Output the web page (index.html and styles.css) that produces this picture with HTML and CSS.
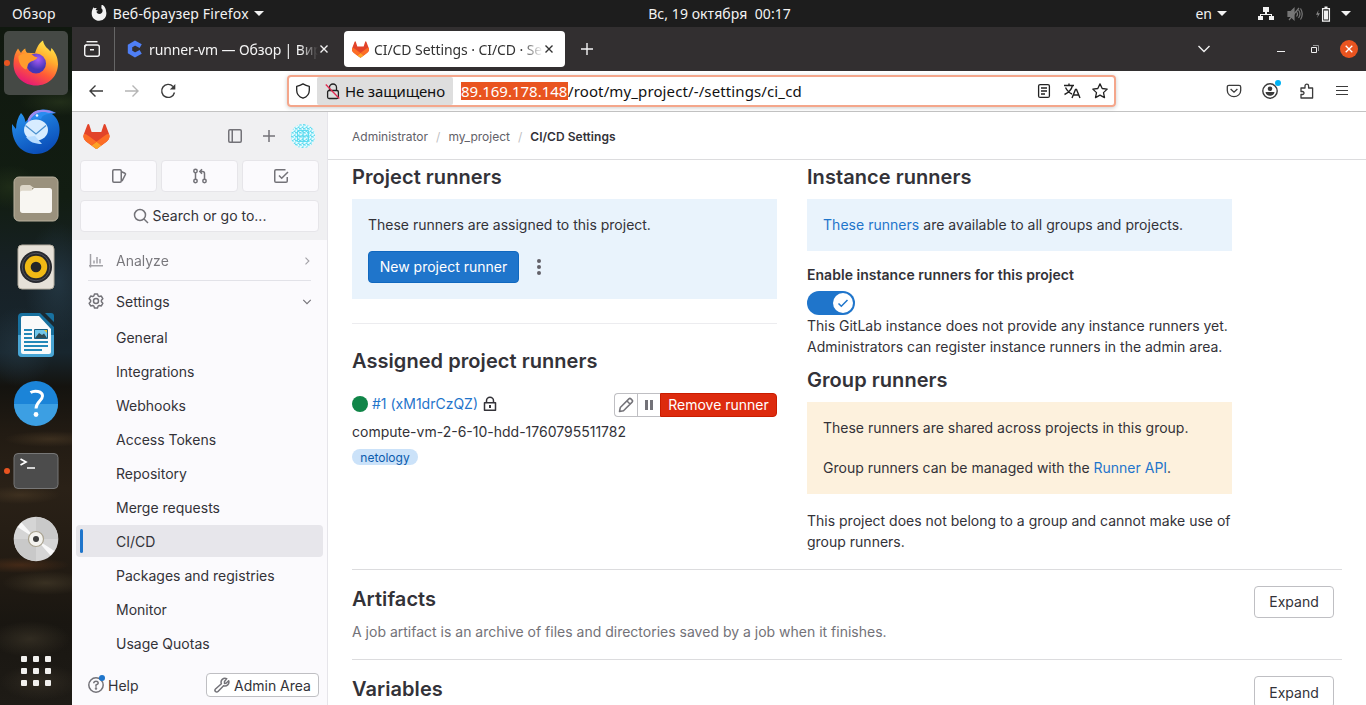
FILE: index.html
```html
<!DOCTYPE html>
<html lang="ru">
<head>
<meta charset="utf-8">
<title>CI/CD Settings · CI/CD · Settings</title>
<link rel="stylesheet" href="styles.css">
</head>
<body>
<div class="desktop">
  <header class="panel">
    <div class="panel-left">
      <span class="t-overview">Обзор</span>
      <span class="app-menu">
        <svg width="16" height="16" viewBox="0 0 16 16"><path fill="#f2f2f2" d="M2.600 2.200c.3.500.7.900 1.200 1.100.7-.3 1.400-.4 2.200-.3-.7.4-1.200 1-1.300 1.700.4.600 1.200.7 2.200.7-.2.7-.8 1-1.500 1.200.3 1.600 1.400 2.500 2.900 2.500 1.900 0 3.300-1.500 3.300-3.300 0-1.100-.5-1.900-1.300-2.500.1-1.200.3-2.300.2-4 3 1.400 4.600 4.500 4.600 7.300A7.300 7.300 0 0 1 8.200 15.800C4 15.800.7 12.700.7 8.500c0-2.400.6-4.500 1.900-6.300z"/></svg>
        <span class="t-app">Веб-браузер Firefox</span><i class="caret"></i>
      </span>
    </div>
    <div class="panel-clock">Вс, 19 октября &nbsp;00:17</div>
    <div class="panel-right">
      <span class="t-lang">en</span><i class="caret"></i>
      <svg class="net" width="16" height="14" viewBox="0 0 16 14"><path fill="#f2f2f2" d="M5 0h6v5H9v2h5v2h2v4h-5V9h2V8H3v1h2v4H0V9h2V7h5V5H5z"/></svg>
      <svg class="vol" width="16" height="16" viewBox="0 0 16 16" fill="none" stroke="#777" stroke-width="1.200"><path fill="#777" d="M1 5.500h3L7 2.500v11L4 10.500H1z"/><path d="M9.500 5.500q2 2.500 0 5M11.500 4q3 4 0 8M13.500 2.500q3.500 5.500 0 11M2 14 12 2"/></svg>
      <svg class="bat" width="17" height="16" viewBox="0 0 17 16"><path fill="#888" d="M3.500 4 1 8.700h2L2 12l3-4.700H3z"/><path fill="none" stroke="#f2f2f2" stroke-width="1.300" d="M7.600 2.600h6.800v12.600H7.600z"/><path fill="#f2f2f2" d="M9 4.500h4v9H9zM9.500.5h3v2h-3z"/></svg>
      <i class="caret"></i>
    </div>
  </header>

  <div class="workspace">
    <nav class="dock">
      <div class="dock-slot slot-active"><i class="running"></i>
        <svg width="48" height="48" viewBox="0 0 48 48">
          <defs>
            <linearGradient id="fx" x1=".8" y1="0" x2=".3" y2="1"><stop offset="0" stop-color="#fff04f"/><stop offset=".35" stop-color="#ffae2e"/><stop offset=".65" stop-color="#ff5a36"/><stop offset="1" stop-color="#e5147b"/></linearGradient>
            <radialGradient id="fxg" cx=".6" cy=".3"><stop offset="0" stop-color="#a95bf5"/><stop offset="1" stop-color="#4636b5"/></radialGradient>
          </defs>
          <path fill="url(#fx)" d="M6 9.500 9 14c1-2 2.500-3.500 4.300-4.500 0 1.500.5 3 1.700 4.300l8 .5C25 8 27 4 31 1.500c1 6 5 8 7.500 11l1-3.500c5 5.500 6.500 11 6.500 16.500C45.500 38 36 46.500 24 46.500S1.500 37.500 1.500 25C1.500 18.500 3 13.500 6 9.500z"/>
          <circle cx="24" cy="24.500" r="10" fill="url(#fxg)"/>
          <path fill="#ff9b2d" d="M6.500 17c5-3.500 11-4 16 .5l3 1c-2 3.500-6 3-8.500 5.500-2 2-1 5-3 6.500C9.500 29 6 23 6.500 17z"/>
        </svg>
      </div>
      <div class="dock-slot">
        <svg width="48" height="48" viewBox="0 0 48 48">
          <defs><linearGradient id="tb" x1="0" y1="0" x2=".5" y2="1"><stop offset="0" stop-color="#2a9af5"/><stop offset="1" stop-color="#0b4fb9"/></linearGradient></defs>
          <path fill="url(#tb)" d="M9 6c3 3 4 6 4.500 9L17 11c4-9 17-11 27-5l-4 1c9 6 9 19 5 27C40 43 32 47 24 47 10 47 1 37 0 22V17l4 5C4 16 6 10 9 6z"/>
          <path fill="#9a8af0" d="M16 12c4-10 15-12 28-6-8-1-12 0-15 4-5-1-9 1-13 6z"/>
          <path fill="#2a8cf0" d="M18 13c5-8 13-10 21-6-7 0-9 2-10 5-4-1-8 0-11 1z"/>
          <ellipse cx="24" cy="23" rx="12" ry="10.500" fill="#d7ecff"/><path fill="#b7dcff" d="M14 30c4 5 8 7 16 7l-7-8z"/>
          <path d="m13.500 18.500 10.500 8.500 10-8.500" fill="none" stroke="#4b91cf" stroke-width="1.200"/><circle cx="25" cy="8.500" r="1.300" fill="#e8f6ff"/>
        </svg>
      </div>
      <div class="dock-slot">
        <svg width="48" height="48" viewBox="0 0 48 48"><rect x="2" y="2" width="44" height="44" rx="5" fill="#9a917d" stroke="#b9b19e"/><path fill="#ddd6c8" d="M8 13c0-2 1-3 3-3h7l4 3h-2v7H8z"/><path fill="#f8f6f2" d="M8 18c0-1.500.8-2.200 2.200-2.200h9L22 13h15.500c1.500 0 2.500 1 2.500 2.500v20c0 1.500-1 2.500-2.500 2.500h-27C9 38 8 37 8 35.500z"/></svg>
      </div>
      <div class="dock-slot">
        <svg width="48" height="48" viewBox="0 0 48 48"><rect x="6" y="2" width="36" height="44" rx="4" fill="#e6e1d8" stroke="#b4ada0"/><circle cx="24" cy="24" r="16" fill="#27282d"/><circle cx="24" cy="24" r="13.800" fill="none" stroke="#50525b"/><circle cx="24" cy="24" r="11.200" fill="#f0b915"/><circle cx="24" cy="24" r="5.300" fill="#252628"/></svg>
      </div>
      <div class="dock-slot">
        <svg width="48" height="48" viewBox="0 0 48 48"><path fill="#18719f" d="M10 2h18l14 14v26a4 4 0 0 1-4 4H10a4 4 0 0 1-4-4V6a4 4 0 0 1 4-4zM33 2h6q3 0 3 3v6z"/><path fill="#49a5d4" d="M6 24h36v18a4 4 0 0 1-4 4H10a4 4 0 0 1-4-4z"/><path fill="#fafafa" d="M11 5h16l12 13v23q0 2-2 2H11q-2 0-2-2V7q0-2 2-2z"/><path d="M12 19h8M12 23h8M12 27h8M12 31h24M12 35h24M12 39h18" stroke="#2488b8" stroke-width="2"/><path fill="#70c6ea" stroke="#155e83" d="M22.500 18.500h13v9h-13z"/><path fill="#304c54" d="m23 27 4-5 3 2 2-1.500 3 4.500z"/><path fill="#eac22d" d="M32 19h3v3z"/></svg>
      </div>
      <div class="dock-slot">
        <svg width="48" height="48" viewBox="0 0 48 48"><circle cx="24" cy="24" r="22" fill="#1b84d8"/><path fill="#3c9fe3" d="M2 25h44a22 22 0 0 1-44 0z"/><path d="M18.500 13.500c4-2.500 12-1.500 12 3.500 0 4.500-6.500 6-6.500 12.500" fill="none" stroke="#fff" stroke-width="3"/><circle cx="24" cy="35.500" r="2.400" fill="#fff"/></svg>
      </div>
      <div class="dock-slot"><i class="running"></i>
        <svg width="48" height="48" viewBox="0 0 48 48"><rect x="2" y="6.500" width="44" height="35" rx="4" fill="#4c4c4c" stroke="#777"/><path d="m8.500 12 5.500 3-5.500 3M15 21h8" fill="none" stroke="#fff" stroke-width="1.700"/></svg>
      </div>
      <div class="dock-slot">
        <svg width="48" height="48" viewBox="0 0 48 48"><circle cx="24" cy="24" r="22.300" fill="#d5d5d5"/><path fill="#c9c9c9" d="M24 24V46A22 22 0 0 1 2 24zM24 24V2a22 22 0 0 1 22 22z"/><path fill="#f8f8f8" d="M24 24 5.500 12 9.500 7.500zM24 24l18.500 12-4 4.500z"/><circle cx="24" cy="24" r="7.500" fill="#f4f3ef" stroke="#a9a28f" stroke-width="1.200"/><circle cx="24" cy="24" r="3" fill="#3e3e3e"/></svg>
      </div>
      <div class="apps-grid"><i></i><i></i><i></i><i></i><i></i><i></i><i></i><i></i><i></i></div>
    </nav>

    <div class="browser">
      <div class="tabbar">
        <div class="recent"><svg width="18" height="18" viewBox="0 0 18 18" fill="none" stroke="#f4f4f4" stroke-width="1.400"><path d="M3.500 1.700h11"/><rect x="1.700" y="5" width="14.600" height="11.200" rx="2"/><path d="M1.700 7.500q0-2.500 2-2.500M7 9.700h4"/></svg></div>
        <div class="tab">
          <svg width="16" height="18" viewBox="0 0 16 18"><path fill="none" stroke="#4f7ff5" stroke-width="4.400" d="M13.700 6.200 8 3 3 6v6l5 3 5.700-3.200"/></svg>
          <span class="tab-title t-tab1">runner-vm — Обзор | Вир</span>
          <svg class="x" width="10" height="10" viewBox="0 0 10 10"><path d="m1.500 1.500 7 7m0-7-7 7" stroke="#f2f2f2" stroke-width="1.400"/></svg>
        </div>
        <div class="tab tab-on">
          <svg width="17" height="17" viewBox="0 0 25 24"><use href="#tanuki"/></svg>
          <span class="tab-title t-tab2">CI/CD Settings · CI/CD · Se</span>
          <svg class="x" width="10" height="10" viewBox="0 0 10 10"><path d="m1.500 1.500 7 7m0-7-7 7" stroke="#333" stroke-width="1.400"/></svg>
        </div>
        <svg class="newtab" width="14" height="14" viewBox="0 0 14 14"><path d="M7 1v12M1 7h12" stroke="#f4f4f4" stroke-width="1.400"/></svg>
        <div class="winctl">
          <svg width="14" height="14" viewBox="0 0 14 14" fill="none"><path d="m1.500 4 5.500 5.500L12.500 4" stroke="#f0f0f0" stroke-width="1.400"/></svg>
          <svg class="min" width="8" height="8" viewBox="0 0 8 8"><path d="M0 6.500h8" stroke="#f0f0f0"/></svg>
          <svg class="max" width="8" height="8" viewBox="0 0 8 8" fill="none"><path d="M.5 2.500h5v5h-5z" stroke="#f0f0f0"/><path d="M2 .5h5.500V6" stroke="#999"/></svg>
          <span class="close"><svg width="8" height="8" viewBox="0 0 8 8"><path d="m.7.7 6.600 6.600m0-6.600L.7 7.300" stroke="#fff" stroke-width="1.300"/></svg></span>
        </div>
      </div>
      <div class="toolbar">
        <svg class="nav-ic" width="16" height="16" viewBox="0 0 16 16" fill="none" stroke="#3b3b3b" stroke-width="1.400"><path d="M15 8H2M7.500 2.500 2 8l5.500 5.500"/></svg>
        <svg class="nav-ic" width="16" height="16" viewBox="0 0 16 16" fill="none" stroke="#b5b5b5" stroke-width="1.400"><path d="M1 8h13M8.500 2.500 14 8l-5.500 5.500"/></svg>
        <svg class="nav-ic" width="16" height="16" viewBox="0 0 16 16" fill="none" stroke="#3b3b3b" stroke-width="1.400"><path d="M14.500 9.500A6.500 6.500 0 1 1 13 3.500"/><path fill="#3b3b3b" stroke="none" d="M15.300 1v5.500H9.800z"/></svg>
        <div class="urlbar">
          <svg class="shield" width="16" height="16" viewBox="0 0 16 16" fill="none" stroke="#222" stroke-width="1.300"><path d="M8 .9Q11 2.600 14.300 3.300v3.900c0 3.800-3 6.800-6.300 8-3.300-1.200-6.300-4.200-6.300-8V3.300Q5 2.600 8 .9z" stroke-linejoin="round"/></svg>
          <span class="insecure"><svg width="16" height="17" viewBox="0 0 16 17" fill="none" stroke="#222" stroke-width="1.300"><path d="M4.500 7V4.500a3.500 3.500 0 0 1 7 0V7"/><rect x="2.600" y="7.500" width="10.800" height="8" rx="1.500"/><path stroke="#e22850" d="m.8 1.500 13.500 14"/></svg><span class="t-unsafe">Не защищено</span></span>
          <span class="url"><mark>89.169.178.148</mark><span class="t-path">/root/my_project/-/settings/ci_cd</span></span>
          <svg width="16" height="16" viewBox="0 0 16 16" fill="none" stroke="#222" stroke-width="1.300"><rect x="2.600" y="1.600" width="10.800" height="12.800" rx="1.500"/><path d="M5 5h6M5 8h6M5 11h4"/></svg>
          <svg width="18" height="16" viewBox="0 0 18 16" fill="none" stroke="#222" stroke-width="1.400"><path d="M1 2.500h10M6 .5v2M2.500 4.500Q5 9.500 9 11M9.500 2.500Q8 8.500 1.500 11.500M9 15l3.500-8.500h1L17 15M10.500 12h5"/></svg>
          <svg width="16" height="16" viewBox="0 0 16 16" fill="none" stroke="#222" stroke-width="1.300" stroke-linejoin="round"><path d="m8 .9 2.200 4.600 5 .6-3.700 3.500 1 5L8 12.100l-4.500 2.500 1-5L.8 6.100l5-.6z"/></svg>
        </div>
        <div class="tools">
          <svg class="pocket" width="16" height="16" viewBox="0 0 16 16" fill="none" stroke="#3b3b3b" stroke-width="1.300"><path d="M3 2.300h10q1.700 0 1.700 1.700v3.500a6.700 6.200 0 0 1-13.400 0V4Q1.300 2.300 3 2.300zM4.600 6 8 9.200 11.400 6"/></svg>
          <span class="acct"><svg width="16" height="16" viewBox="0 0 16 16"><circle cx="8" cy="8" r="7.200" fill="none" stroke="#3b3b3b" stroke-width="1.400"/><circle cx="8" cy="5.800" r="2.300" fill="#3b3b3b"/><path fill="#3b3b3b" d="M3.500 9h9q-.6 3.800-4.500 3.800T3.500 9z"/></svg></span>
          <svg width="16" height="16" viewBox="0 0 16 16" fill="none" stroke="#3b3b3b" stroke-width="1.300" stroke-linejoin="round"><path d="M2 5h4V3a1.800 1.800 0 0 1 3.600 0v2h4v10H2v-3.500h1.500a1.500 1.500 0 0 0 0-3H2z"/></svg>
          <svg width="14" height="14" viewBox="0 0 14 14"><path d="M1 2.500h12M1 6.500h12M1 10.500h12" stroke="#3b3b3b" stroke-width="1.200"/></svg>
        </div>
      </div>

      <div class="app">
        <aside class="side">
          <div class="side-top">
            <div class="brand-row">
              <svg width="27" height="25" viewBox="0 0 25 24"><g id="tanuki"><path d="m24.500 9.500-.03-.09L21.080.56a.9.900 0 0 0-1.690.09l-2.290 7.010H7.830L5.540.65a.9.900 0 0 0-1.690-.09L.47 9.410l-.03.09a6.300 6.300 0 0 0 2.090 7.280l.03.020 5.150 3.860 2.560 1.940 1.560 1.180a1.050 1.050 0 0 0 1.270 0l1.560-1.180 2.560-1.940 5.190-3.880a6.300 6.300 0 0 0 2.090-7.280Z" fill="#E24329"/><path d="m24.500 9.500-.03-.09a11.440 11.440 0 0 0-4.560 2.050l-7.450 5.630 4.740 3.580 5.190-3.890a6.300 6.300 0 0 0 2.110-7.280Z" fill="#FC6D26"/><path d="m7.710 20.680 2.560 1.940 1.560 1.180a1.050 1.050 0 0 0 1.270 0l1.560-1.180 2.560-1.940-4.750-3.590-4.760 3.590Z" fill="#FCA326"/><path d="M5.010 11.460A11.430 11.430 0 0 0 .46 9.410l-.03.090a6.300 6.300 0 0 0 2.090 7.280l5.180 3.890 4.750-3.590z" fill="#FC6D26"/></g></svg>
              <svg class="gi b1" width="16" height="16" viewBox="0 0 16 16"><rect x="1.750" y="1.750" width="12.500" height="12.500" rx="1.200"/><path d="M5.250 2v12"/></svg>
              <svg class="gi b2" width="16" height="16" viewBox="0 0 16 16"><path d="M8 2v12M2 8h12"/></svg>
              <svg class="avatar" width="24" height="24" viewBox="0 0 24 24"><defs><pattern id="idn" width="4" height="4" patternUnits="userSpaceOnUse"><path fill="#65dbef" d="M0 0h2L0 2zM4 4H2l2-2zM2 0l1 1-1 1-1-1zM0 2l1 1-1 1z"/></pattern></defs><circle cx="12" cy="12" r="12" fill="#e3fbff"/><circle cx="12" cy="12" r="12" fill="url(#idn)"/><path d="M6.500 6.500h11v11h-11zM12 6.500v11M6.500 12h11" fill="none" stroke="#5edcf0" stroke-width="1"/></svg>
            </div>
            <div class="trio">
              <span><svg class="gi" width="16" height="16" viewBox="0 0 16 16"><rect x="1.750" y="1.750" width="8.500" height="12.500" rx="1.200"/><path d="M10.500 3.700 14 5.300q.8.400.4 1.200L11 13.200"/></svg></span>
              <span><svg class="gi" width="16" height="16" viewBox="0 0 16 16"><circle cx="3.500" cy="3" r="1.700"/><circle cx="3.500" cy="13" r="1.700"/><circle cx="12.500" cy="13" r="1.700"/><path d="M3.500 5v6M12.500 11V5.500q0-2-2-2H8M10 1.200 7.800 3.500 10 5.800"/></svg></span>
              <span><svg class="gi" width="16" height="16" viewBox="0 0 16 16"><path d="M12.500 1.750H3q-1.250 0-1.250 1.250v10q0 1.250 1.250 1.250h10q1.250 0 1.250-1.250V9M6 7.500l2.700 2.700L15 4"/></svg></span>
            </div>
            <div class="search"><svg class="gi" width="16" height="16" viewBox="0 0 16 16"><circle cx="7" cy="7" r="5.500"/><path d="m11 11 4 4"/></svg><span class="t-search">Search or go to...</span></div>
          </div>
          <div class="side-nav">
            <a class="group dim"><svg class="gi" width="16" height="16" viewBox="0 0 16 16"><path d="M2.500 1v13.500M1 12.700h14M6 10.500v-3M9 10.500V4M12 10.500V6"/></svg><span class="t-analyze">Analyze</span><svg class="gi end" width="12" height="12" viewBox="0 0 16 16"><path d="m6 3.500 4.500 4.500L6 12.500"/></svg></a>
            <hr>
            <a class="group"><svg class="gi" width="16" height="16" viewBox="0 0 16 16"><path stroke-linejoin="round" d="M6.500.9h3l.6 2 1.200.7 2-.5 1.500 2.600L13.400 7.200v1.600l1.400 1.500-1.500 2.600-2-.5-1.200.7-.6 2h-3l-.6-2-1.200-.7-2 .5-1.500-2.600 1.400-1.500V7.200L1.200 5.700l1.500-2.600 2 .5 1.200-.7z"/><circle cx="8" cy="8" r="2.500"/></svg>Settings<svg class="gi end" width="12" height="12" viewBox="0 0 16 16"><path d="M3 6.500l5 5 5-5"/></svg></a>
            <ul>
              <li>General</li><li>Integrations</li><li>Webhooks</li><li>Access Tokens</li><li>Repository</li><li>Merge requests</li><li class="on">CI/CD</li><li>Packages and registries</li><li>Monitor</li><li>Usage Quotas</li>
            </ul>
          </div>
          <div class="side-foot">
            <span class="help"><svg class="gi" width="16" height="16" viewBox="0 0 16 16"><circle cx="8" cy="8" r="7.200"/><path d="M5.700 6.300q.2-2 2.300-2t2.300 1.800Q10.300 7.300 8 8v1.700"/><circle cx="8" cy="11.500" r=".5"/></svg>Help</span>
            <span class="admin"><svg class="gi" width="16" height="16" viewBox="0 0 16 16"><path stroke-linejoin="round" d="M10.500 6.500V4.500l2.200-2.900a4 4 0 0 0-5.300 5.200L1.500 12a1.700 1.700 0 0 0 2.500 2.500l5.600-5.700a4 4 0 0 0 5.100-5L12 6.300z"/></svg>Admin Area</span>
          </div>
        </aside>

        <main class="main">
          <div class="crumbs"><span>Administrator</span><i>/</i><span>my_project</span><i>/</i><b>CI/CD Settings</b></div>
          <div class="content">
            <section class="runners">
              <div class="col">
                <h4>Project runners</h4>
                <div class="info">
                  <p>These runners are assigned to this project.</p>
                  <div class="new-row"><span class="btn-blue">New project runner</span><svg width="16" height="16" viewBox="0 0 16 16" fill="#626168"><circle cx="8" cy="2" r="2"/><circle cx="8" cy="8" r="2"/><circle cx="8" cy="14" r="2"/></svg></div>
                </div>
                <hr>
                <h4 class="assigned">Assigned project runners</h4>
                <div class="runner">
                  <i class="dot"></i><a class="t-id">#1 (xM1drCzQZ)</a>
                  <svg class="lock" width="14" height="16" viewBox="0 0 14 16"><path d="M3.500 6.500V4.800a3.500 3.500 0 0 1 7 0v1.700M1.500 6.750h11v7.500h-11z" fill="none" stroke="#333238" stroke-width="1.500" stroke-linejoin="round"/><path fill="#333238" d="M6 9h2v3H6z"/></svg>
                  <span class="group-btn"><span><svg class="gi" width="16" height="16" viewBox="0 0 16 16"><path stroke-linejoin="round" d="m1.500 14.500.8-4L10.900 1.900q1-1 2 0l1.200 1.200q1 1 0 2L5.500 13.700zM9 4l3 3"/></svg></span><span><svg width="16" height="16" viewBox="0 0 16 16" fill="#737278"><path d="M4 3h3v10H4zM9 3h3v10H9z"/></svg></span><b>Remove runner</b></span>
                </div>
                <p class="desc">compute-vm-2-6-10-hdd-1760795511782</p>
                <span class="badge">netology</span>
              </div>
              <div class="col">
                <h4>Instance runners</h4>
                <div class="info available"><p><a>These runners</a> are available to all groups and projects.</p></div>
                <div class="label">Enable instance runners for this project</div>
                <div class="toggle"><span><svg width="12" height="12" viewBox="0 0 12 12"><path d="M1.500 6.500 4.300 9.200 10.500 3" fill="none" stroke="#1f75cb" stroke-width="1.500"/></svg></span></div>
                <p>This GitLab instance does not provide any instance runners yet.<br>Administrators can register instance runners in the admin area.</p>
                <h4 class="group-h">Group runners</h4>
                <div class="warn"><p>These runners are shared across projects in this group.</p><p>Group runners can be managed with the <a>Runner API</a>.</p></div>
                <p class="after">This project does not belong to a group and cannot make use of<br>group runners.</p>
              </div>
            </section>
            <section class="block"><div><h4>Artifacts</h4><p>A job artifact is an archive of files and directories saved by a job when it finishes.</p></div><span class="expand raised">Expand</span></section>
            <section class="block"><div><h4>Variables</h4></div><span class="expand">Expand</span></section>
          </div>
        </main>
      </div>
    </div>
  </div>
</div>
</body>
</html>
```
FILE: styles.css
```css
* { box-sizing: border-box; }
body, p, h4, ul, hr { margin: 0; padding: 0; }
body { overflow: hidden; font-family: "Noto Sans", sans-serif; }
svg { display: block; flex: none; }
.desktop { width: 1366px; height: 705px; display: flex; flex-direction: column; overflow: hidden; }

/* Top panel */
.panel { height: 27px; flex: none; background: #1d1d1d; color: #f2f2f2; font-size: 14px; display: grid; grid-template-columns: 1fr auto 1fr; align-items: center; white-space: nowrap; }
.panel-left, .panel-right, .app-menu { display: flex; align-items: center; }
.panel-left { padding-left: 12px; gap: 35px; }
.t-overview { letter-spacing: .2px; }
.app-menu svg { margin-right: 6px; margin-top: -1px; }
.t-app { letter-spacing: .18px; }
.panel-clock { padding-left: 73px; letter-spacing: .07px; }
.panel-right { justify-content: flex-end; padding-right: 15px; }
.caret { border: 5px solid transparent; border-top-color: #f2f2f2; border-bottom: 0; margin-left: 5px; }
.net { margin-left: 31px; }
.vol { margin-left: 13px; }
.bat { margin-left: 12px; }
.bat + .caret { margin-left: 9px; }

.workspace { flex: 1; display: flex; min-height: 0; }

/* Dock */
.dock { width: 72px; flex: none; display: flex; flex-direction: column; align-items: center; padding-top: 2px;
  background:
    radial-gradient(ellipse 40px 14px at 60px 75px, #2a381eaa, transparent),
    radial-gradient(ellipse 30px 22px at 10px 160px, #26351b99, transparent),
    radial-gradient(ellipse 34px 60px at 58px 255px, #2a425199, transparent),
    radial-gradient(ellipse 34px 40px at 20px 320px, #26394599, transparent),
    radial-gradient(ellipse 46px 8px at 50px 412px, #4c3b2699, transparent),
    radial-gradient(ellipse 40px 9px at 20px 468px, #4c3b2699, transparent),
    radial-gradient(ellipse 50px 8px at 20px 538px, #5a331a99, transparent),
    radial-gradient(ellipse 44px 12px at 46px 556px, #4a402d99, transparent),
    radial-gradient(ellipse 40px 18px at 30px 612px, #40392b99, transparent),
    radial-gradient(ellipse 40px 18px at 40px 655px, #3b342999, transparent),
    linear-gradient(#10180f, #121d12 25%, #172126 36%, #18262e 48%, #14130f 53%, #221b13 60%, #2a2117 68%, #221b13 80%, #191611 88%, #1e1b16); }
.dock-slot { position: relative; width: 64px; height: 64px; flex: none; margin: 2px 0; display: flex; align-items: center; justify-content: center; }
.slot-active { background: #454945; border-radius: 5px; }
.running { position: absolute; left: 0; top: 29px; width: 6px; height: 6px; border-radius: 50%; background: #e95420; }
.apps-grid { display: grid; grid-template-columns: repeat(3, 6px); gap: 6px; margin-top: 83px; }
.apps-grid i { height: 6px; background: #f1f0ee; border-radius: 1px; }

/* Browser */
.browser { flex: 1; display: flex; flex-direction: column; min-width: 0; background: #fff; }
.tabbar { height: 44px; flex: none; background: #322f30; display: flex; align-items: center; color: #f4f4f4; font-size: 14px; }
.recent { width: 43px; height: 44px; border-right: 1px solid #666; display: flex; align-items: center; padding-left: 11px; }
.tab { width: 221px; height: 36px; display: flex; align-items: center; padding: 0 7px 0 12px; margin-right: 8px; }
.tab-on { background: #fff; color: #333; border-radius: 4px; padding: 0 11px 0 8px; margin: 0; }
.tab-title { width: 169px; margin-left: 5px; white-space: nowrap; mask-image: linear-gradient(90deg, #000 calc(100% - 22px), transparent); }
.t-tab1 { letter-spacing: -.12px; margin-left: 6px; mask-image: linear-gradient(90deg, #000 calc(100% - 18px), transparent); }
.t-tab2 { letter-spacing: -.08px; }
.x { margin-left: auto; }
.newtab { margin-left: 15px; }
.winctl { margin-left: auto; display: flex; align-items: center; padding-right: 8px; }
.min { margin-left: 66px; }
.max { margin-left: 26px; }
.close { width: 18px; height: 18px; border-radius: 50%; background: #e95420; display: flex; align-items: center; justify-content: center; margin-left: 21px; }
.toolbar { height: 41px; flex: none; border-bottom: 1px solid #c3c3c3; display: flex; align-items: center; padding-left: 16px; }
.nav-ic { margin-right: 20px; }
.urlbar { width: 829px; height: 32px; margin-left: 91px; border: 2px solid #f4a68b; border-radius: 4px; box-shadow: 0 1px 4px #0003; display: flex; align-items: center; gap: 11px; padding-right: 6px; font-size: 15px; color: #111; white-space: nowrap; }
.shield { margin-left: 6px; margin-right: -5px; }
.insecure { background: #dedede; height: 28px; width: 136px; border-radius: 2px; display: flex; align-items: center; gap: 4px; padding-left: 8px; margin-right: -3px; }
.t-unsafe { letter-spacing: -.15px; }
.url { flex: 1; display: flex; align-items: center; }
mark { background: #e95420; color: #fff; height: 18px; line-height: 18px; width: 107px; }
.t-path { letter-spacing: .12px; }
.tools { margin-left: auto; display: flex; align-items: center; gap: 20px; padding-right: 17px; }
.pocket { margin-right: 1px; }
.acct { position: relative; margin-right: 1px; margin-left: -1px; }
.acct::after { content: ""; position: absolute; right: -3px; top: -3px; width: 6px; height: 6px; border-radius: 50%; background: #00b3f4; }

/* Application */
.app { flex: 1; display: flex; min-height: 0; font-family: Inter, sans-serif; font-size: 14px; line-height: 21px; color: #333238; }
.gi { fill: none; stroke: #737278; stroke-width: 1.500; }
.side { width: 256px; flex: none; border-right: 1px solid #e6e5ea; background: #fbfafd; display: flex; flex-direction: column; }
.side-top { height: 128px; background: #f0f0f2; padding: 8px 8px 0; }
.brand-row { display: flex; align-items: center; height: 32px; padding-left: 3px; }
.b1 { margin-left: auto; }
.b2 { margin-left: 18px; }
.avatar { margin: 0 4px 0 14px; }
.trio { display: grid; grid-template-columns: repeat(3, 1fr); gap: 4px; margin-top: 8px; }
.trio span, .search { height: 32px; background: #fbfafd; border: 1px solid #e6e5e9; border-radius: 4px; display: flex; align-items: center; justify-content: center; }
.search { margin-top: 8px; gap: 4px; }
.t-search { padding-bottom: 1px; }
.side-nav { flex: 1; padding: 5px 4px 0; }
.group { height: 32px; display: flex; align-items: center; padding: 0 10px 0 12px; gap: 12px; }
.t-analyze { padding-bottom: 1px; }
.end { margin-left: auto; }
.dim { opacity: .65; }
.dim + hr { border: 0; border-top: 1px solid #e2e2e8; margin: 3px 12px 4px; }
.side-nav ul { list-style: none; margin-top: 4px; }
.side-nav li { height: 32px; margin-bottom: 2px; display: flex; align-items: center; padding-left: 40px; }
.side-nav .on { position: relative; background: #e7e6eb; border-radius: 4px; }
.on::before { content: ""; position: absolute; left: 4px; top: 4px; bottom: 4px; width: 3px; border-radius: 2px; background: #1f75cb; }
.side-foot { height: 40px; display: flex; align-items: center; justify-content: space-between; padding: 0 8px 0 16px; }
.help { position: relative; display: flex; align-items: center; gap: 4px; }
.help::after { content: ""; position: absolute; left: 11px; top: 0; width: 6px; height: 6px; border-radius: 50%; background: #1f75cb; }
.admin { height: 24px; width: 113px; border: 1px solid #bfbfc3; border-radius: 4px; background: #fff; display: flex; align-items: center; gap: 4px; padding-left: 7px; white-space: nowrap; }

.main { flex: 1; display: flex; flex-direction: column; min-width: 0; }
.crumbs { height: 48px; flex: none; border-bottom: 1px solid #dcdcde; display: flex; align-items: center; padding: 1px 24px 0; font-size: 12px; color: #626168; }
.crumbs i { font-style: normal; color: #bfbfc3; margin: 0 8px; }
.crumbs b { color: #333238; font-weight: 600; letter-spacing: .03px; }
.content { padding: 0 24px; overflow: hidden; }
.runners { display: flex; gap: 30px; height: 409px; }
.col { width: 425px; white-space: nowrap; }
h4 { font-size: 20px; font-weight: 600; line-height: 24px; padding-top: 5px; letter-spacing: .06px; }
.info { background: #e9f3fc; padding: 16px; margin-top: 10px; }
.info p { line-height: 20px; }
.available { letter-spacing: .03px; }
.info a, .warn a, .t-id { color: #1f75cb; }
.new-row { display: flex; align-items: center; margin-top: 16px; gap: 12px; }
.btn-blue { height: 32px; width: 151px; background: #1f75cb; border: 1px solid #1068bf; color: #fff; border-radius: 4px; display: flex; align-items: center; justify-content: center; padding-bottom: 1px; }
.col hr { border: 0; border-top: 1px solid #ececef; margin-top: 24px; }
.assigned { padding-top: 25px; }
.runner { display: flex; align-items: center; margin-top: 20px; height: 24px; }
.dot { width: 16px; height: 16px; border-radius: 50%; background: #108548; margin: -2px 4px 0 0; }
.t-id { padding-bottom: 3px; }
.lock { margin: -2px 0 0 5px; }
.group-btn { margin-left: auto; display: flex; height: 24px; }
.group-btn span { width: 23px; border: 1px solid #bfbfc3; border-right: 0; display: flex; align-items: center; justify-content: center; }
.group-btn span:first-child { border-radius: 4px 0 0 4px; }
.group-btn b { width: 117px; font-weight: 400; background: #dd2b0e; border: 1px solid #c91c00; color: #fff; border-radius: 0 4px 4px 0; line-height: 22px; text-align: center; }
.desc { margin-top: 4px; }
.badge { display: block; width: 66px; height: 16px; margin-top: 7px; border-radius: 8px; background: #cbe2f9; color: #0b5cad; font-size: 12px; line-height: 18px; text-align: center; }
.label { font-weight: 600; margin-top: 14px; line-height: 20px; letter-spacing: .03px; }
.toggle { width: 48px; height: 24px; border-radius: 12px; background: #1f75cb; margin: 6px 0 0; padding: 2px; display: flex; justify-content: flex-end; }
.toggle span { width: 20px; border-radius: 50%; background: #fff; display: flex; align-items: center; justify-content: center; }
.group-h { padding-top: 11px; }
.warn { background: #fdf1dd; padding: 16px; margin-top: 10px; line-height: 20px; }
.warn p + p { margin-top: 20px; }
.after { margin-top: 16px; }
.block { border-top: 1px solid #dcdcde; height: 90px; display: flex; justify-content: space-between; padding: 16px 8px 0 0; }
.block h4 { padding-top: 1px; }
.block p { color: #737278; margin-top: 10px; }
.expand { width: 80px; height: 32px; flex: none; border: 1px solid #bfbfc3; border-radius: 4px; display: flex; align-items: center; justify-content: center; }
.raised { padding-bottom: 1px; }
```
